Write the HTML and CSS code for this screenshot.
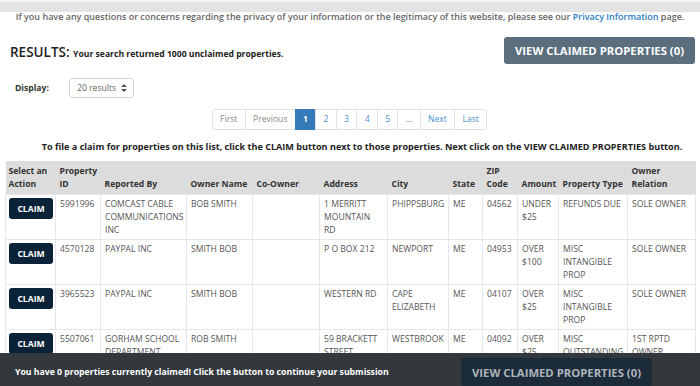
FILE: index.html
```html
<!DOCTYPE html>
<html lang="en">
<head>
    <meta charset="UTF-8">
    <meta name="viewport" content="width=device-width, initial-scale=1.0">
    <title>Unclaimed Property Search Results</title>
    <link rel="stylesheet" href="styles.css">
</head>
<body>
    <div class="top-band"></div>
    <p class="privacy-note">If you have any questions or concerns regarding the privacy of your information or the legitimacy of this website, please see our <a href="#">Privacy Information</a> page.</p>

    <div class="container">
        <div class="results-head">
            <h2><span class="results-title">RESULTS:</span> <span class="results-count">Your search returned 1000 unclaimed properties.</span></h2>
            <button class="view-btn">VIEW CLAIMED PROPERTIES (0)</button>
        </div>

        <div class="display-row">
            <label for="perPage">Display:</label>
            <div class="select-box" id="perPage">
                <span>20 results</span>
                <svg width="6" height="8" viewBox="0 0 6 8"><path d="M3 0 L6 3 L0 3 Z M0 5 L6 5 L3 8 Z" fill="#555"/></svg>
            </div>
        </div>

        <ul class="pagination">
            <li class="muted">First</li>
            <li class="muted">Previous</li>
            <li class="active">1</li>
            <li>2</li>
            <li>3</li>
            <li>4</li>
            <li>5</li>
            <li>...</li>
            <li>Next</li>
            <li>Last</li>
        </ul>

        <p class="instructions">To file a claim for properties on this list, click the CLAIM button next to those properties. Next click on the VIEW CLAIMED PROPERTIES button.</p>

        <table class="results-table">
            <colgroup>
                <col style="width:50px"><col style="width:45px"><col style="width:86px"><col style="width:66px">
                <col style="width:67px"><col style="width:68px"><col style="width:61px"><col style="width:34px">
                <col style="width:35px"><col style="width:41px"><col style="width:69px"><col style="width:68px">
            </colgroup>
            <thead>
                <tr>
                    <th>Select an Action</th>
                    <th>Property ID</th>
                    <th>Reported By</th>
                    <th>Owner Name</th>
                    <th>Co-Owner</th>
                    <th>Address</th>
                    <th>City</th>
                    <th>State</th>
                    <th>ZIP Code</th>
                    <th>Amount</th>
                    <th>Property Type</th>
                    <th>Owner Relation</th>
                </tr>
            </thead>
            <tbody>
                <tr>
                    <td><button class="claim-btn">CLAIM</button></td>
                    <td>5991996</td>
                    <td>COMCAST CABLE COMMUNICATIONS INC</td>
                    <td>BOB SMITH</td>
                    <td></td>
                    <td>1 MERRITT MOUNTAIN RD</td>
                    <td>PHIPPSBURG</td>
                    <td>ME</td>
                    <td>04562</td>
                    <td>UNDER $25</td>
                    <td>REFUNDS DUE</td>
                    <td>SOLE OWNER</td>
                </tr>
                <tr>
                    <td><button class="claim-btn">CLAIM</button></td>
                    <td>4570128</td>
                    <td>PAYPAL INC</td>
                    <td>SMITH BOB</td>
                    <td></td>
                    <td>P O BOX 212</td>
                    <td>NEWPORT</td>
                    <td>ME</td>
                    <td>04953</td>
                    <td>OVER $100</td>
                    <td>MISC INTANGIBLE PROP</td>
                    <td>SOLE OWNER</td>
                </tr>
                <tr>
                    <td><button class="claim-btn">CLAIM</button></td>
                    <td>3965523</td>
                    <td>PAYPAL INC</td>
                    <td>SMITH BOB</td>
                    <td></td>
                    <td>WESTERN RD</td>
                    <td>CAPE ELIZABETH</td>
                    <td>ME</td>
                    <td>04107</td>
                    <td>OVER $25</td>
                    <td>MISC INTANGIBLE PROP</td>
                    <td>SOLE OWNER</td>
                </tr>
                <tr>
                    <td><button class="claim-btn">CLAIM</button></td>
                    <td>5507061</td>
                    <td>GORHAM SCHOOL DEPARTMENT</td>
                    <td>ROB SMITH</td>
                    <td></td>
                    <td>59 BRACKETT STREET</td>
                    <td>WESTBROOK</td>
                    <td>ME</td>
                    <td>04092</td>
                    <td>OVER $25</td>
                    <td>MISC OUTSTANDING CHECKS</td>
                    <td>1ST RPTD OWNER</td>
                </tr>
            </tbody>
        </table>
    </div>

    <div class="claim-bar">
        <span>You have 0 properties currently claimed! Click the button to continue your submission</span>
        <button class="bar-btn">VIEW CLAIMED PROPERTIES (0)</button>
    </div>
</body>
</html>
```

FILE: styles.css
```css
* {
    box-sizing: border-box;
    margin: 0;
    padding: 0;
}

body {
    font-family: 'Open Sans', 'Liberation Sans', sans-serif;
    background: white;
    color: #333;
    font-size: 8.6px;
}

.top-band {
    height: 12px;
    border-top: 2px solid #f4f4f4;
    background: #e3e3e3;
}

.privacy-note {
    text-align: center;
    color: #666;
    font-weight: 600;
    font-size: 9px;
    line-height: 10px;
}

.privacy-note a {
    color: #2b7cc4;
    text-decoration: none;
}

.container {
    padding: 0 5px 60px;
}

.results-head {
    display: flex;
    align-items: center;
    justify-content: space-between;
    margin-top: 15px;
    padding-left: 5px;
}

.results-head h2 {
    font-weight: 600;
    color: #222;
    margin-top: 2px;
}

.results-title {
    font-size: 13.5px;
}

.results-count {
    font-size: 8.6px;
    font-weight: 700;
}

.view-btn {
    background: #5a6e7e;
    color: white;
    border: none;
    border-radius: 3px;
    font-family: inherit;
    font-weight: 700;
    font-size: 11.3px;
    width: 191px;
    height: 27px;
}

.display-row {
    display: flex;
    align-items: center;
    margin-top: 14px;
    padding-left: 10px;
}

.display-row label {
    font-weight: 700;
    color: #333;
    width: 54px;
}

.select-box {
    display: flex;
    align-items: center;
    gap: 5px;
    height: 20px;
    padding: 0 6px 0 7px;
    border: 1px solid #d5d5d5;
    border-radius: 3px;
    color: #666;
}

.pagination {
    list-style: none;
    display: flex;
    justify-content: center;
    margin-top: 11px;
}

.pagination li {
    height: 21px;
    line-height: 19px;
    padding: 0 7.3px;
    border: 1px solid #e2e2e2;
    margin-left: -1px;
    color: #4a90d0;
}

.pagination li:first-child {
    border-radius: 3px 0 0 3px;
}

.pagination li:last-child {
    border-radius: 0 3px 3px 0;
}

.pagination li.muted {
    color: #888;
}

.pagination li.active {
    background: #337ab7;
    border-color: #337ab7;
    color: white;
    font-weight: 700;
}

.instructions {
    text-align: center;
    font-weight: 700;
    font-size: 9.1px;
    color: #222;
    margin-top: 10px;
    padding-left: 24px;
    line-height: 13px;
}

.results-table {
    width: 690px;
    table-layout: fixed;
    border-collapse: collapse;
    margin-top: 8px;
}

.results-table th {
    background: #dcdcdc;
    font-weight: 700;
    color: #333;
    text-align: left;
    vertical-align: bottom;
    line-height: 12.5px;
    padding: 4px 4px 4px;
}

.results-table td {
    color: #555;
    vertical-align: top;
    line-height: 13px;
    padding: 3px 4px 2px;
    border: 1px solid #e6e6ee;
    height: 45px;
}

.results-table th:first-child,
.results-table td:first-child {
    padding-left: 3px;
}

.claim-btn {
    background: #0b2339;
    color: white;
    border: none;
    border-radius: 3px;
    font-family: inherit;
    font-weight: 700;
    font-size: 8.6px;
    width: 44px;
    height: 21px;
}

.claim-bar {
    position: fixed;
    left: 0;
    right: 0;
    bottom: 0;
    height: 33px;
    background: #33383d;
    display: flex;
    align-items: flex-start;
    padding: 5px 48px 0 15px;
    overflow: hidden;
}

.claim-bar span {
    color: white;
    font-weight: 700;
    font-size: 8.7px;
    line-height: 28px;
}

.bar-btn {
    margin-left: auto;
    width: 191px;
    height: 28px;
    background: #1b2b3a;
    color: #aeb5bc;
    border: none;
    border-radius: 3px;
    font-family: inherit;
    font-weight: 700;
    font-size: 11.3px;
}
```
